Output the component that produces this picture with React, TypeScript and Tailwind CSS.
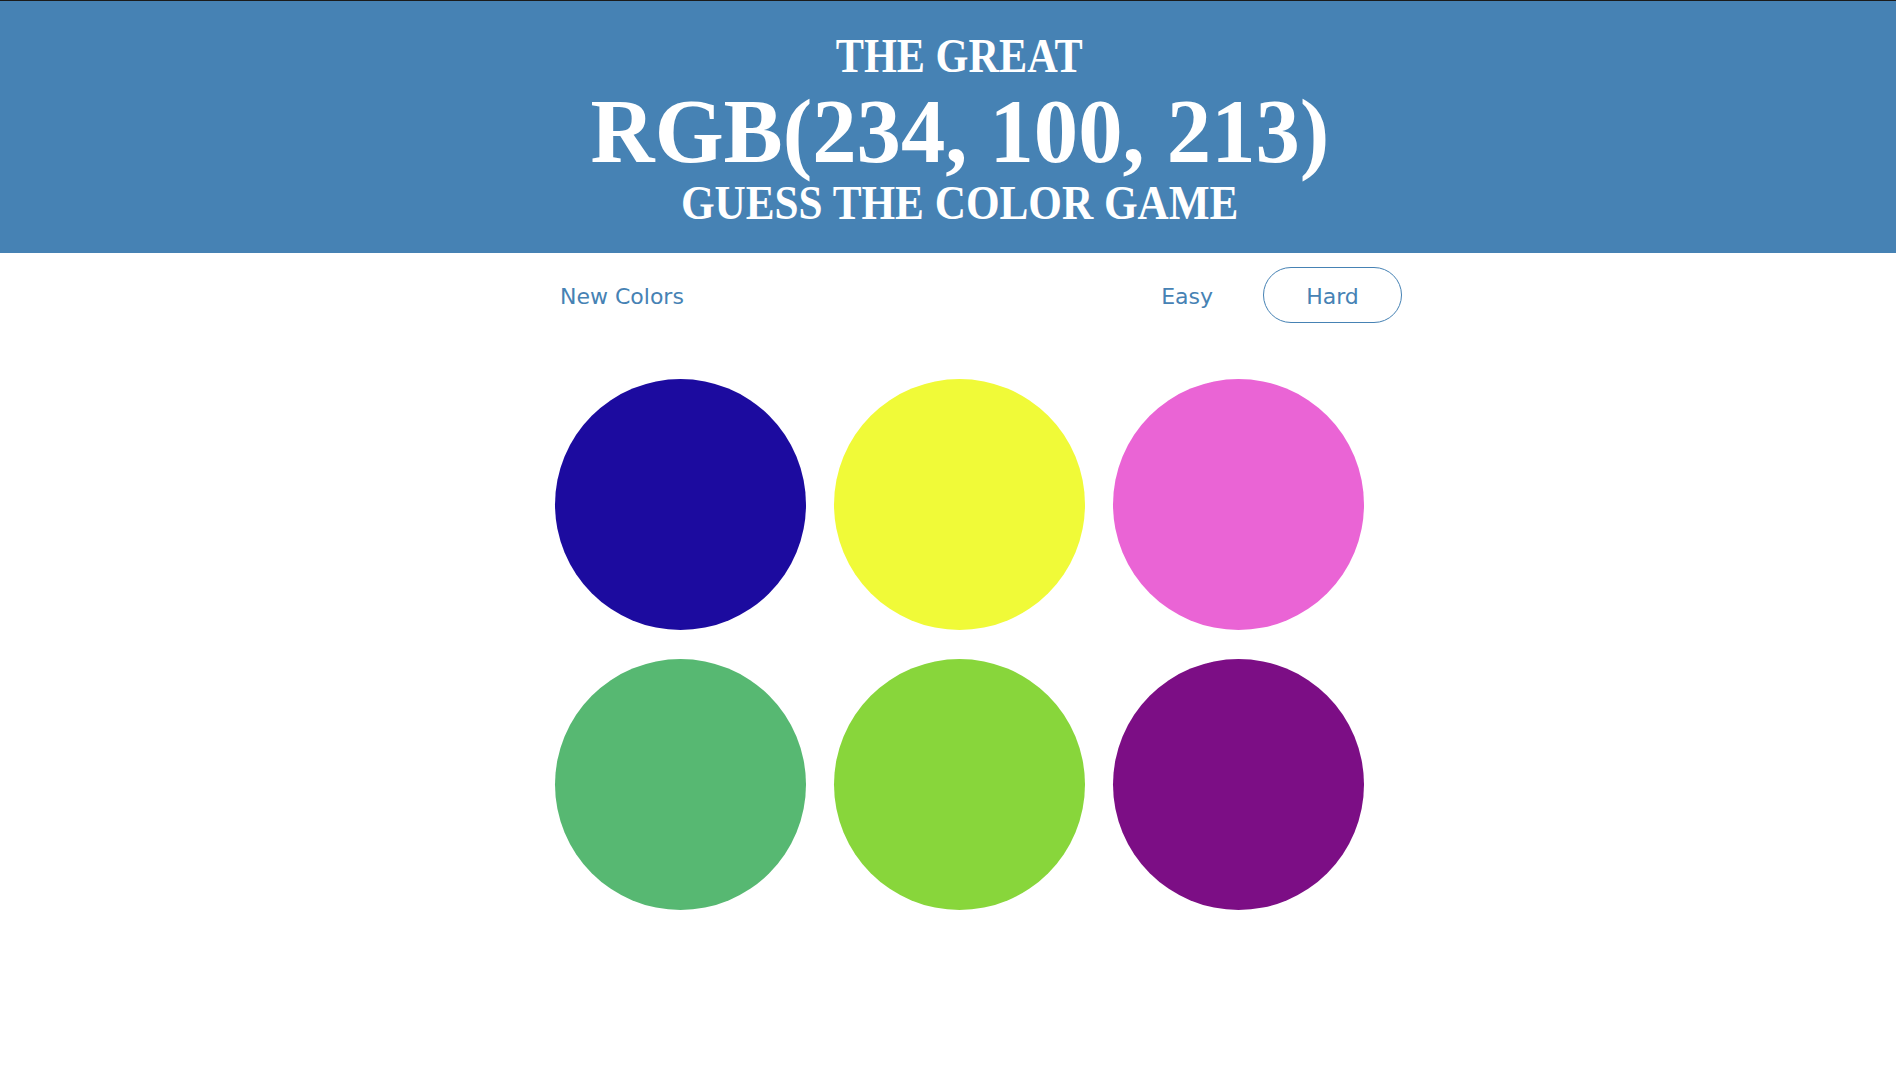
const colors = [
  "#1c0b9f",
  "#f0fa38",
  "#ea64d5",
  "#57b872",
  "#88d63b",
  "#7c0e85",
];

const App = () => {
  return (
    <div className="min-h-screen bg-white">
      <header className="h-[253px] border-t border-[#1b1b1b] bg-[#4682b4] pl-[23px] text-white [font-family:'Liberation_Serif',serif] font-bold">
        <div className="flex flex-col items-center pt-[31px]">
          <h2 className="text-[48px] leading-none scale-x-[0.88]">THE GREAT</h2>
          <h1 className="mt-[7px] text-[90px] leading-none scale-x-[0.985]">RGB(234, 100, 213)</h1>
          <h2 className="mt-[2px] text-[48px] leading-none scale-x-[0.9]">GUESS THE COLOR GAME</h2>
        </div>
      </header>

      <div className="pl-[23px]">
        <div className="mx-auto w-[837px]">
          <nav className="ml-[19px] mr-[-24px] mt-[14px] flex items-center text-[22px] text-[#4682b4] [font-family:'DejaVu_Sans',sans-serif]">
            <button className="leading-none">
              <span className="inline-block translate-y-[2px]">New Colors</span>
            </button>
            <div className="ml-auto flex items-center gap-[50px]">
              <button className="leading-none">
                <span className="inline-block translate-y-[2px]">Easy</span>
              </button>
              <button className="h-[56px] w-[139px] rounded-full border border-[#4682b4] leading-none">
                <span className="inline-block translate-y-[2px]">Hard</span>
              </button>
            </div>
          </nav>

          <div className="mx-auto mt-[56px] grid w-fit grid-cols-[repeat(3,251px)] gap-x-[28px] gap-y-[29px]">
            {colors.map((c) => (
              <div key={c} className="h-[251px] w-[251px] rounded-full" style={{ backgroundColor: c }} />
            ))}
          </div>
        </div>
      </div>
    </div>
  );
};

export default App;
